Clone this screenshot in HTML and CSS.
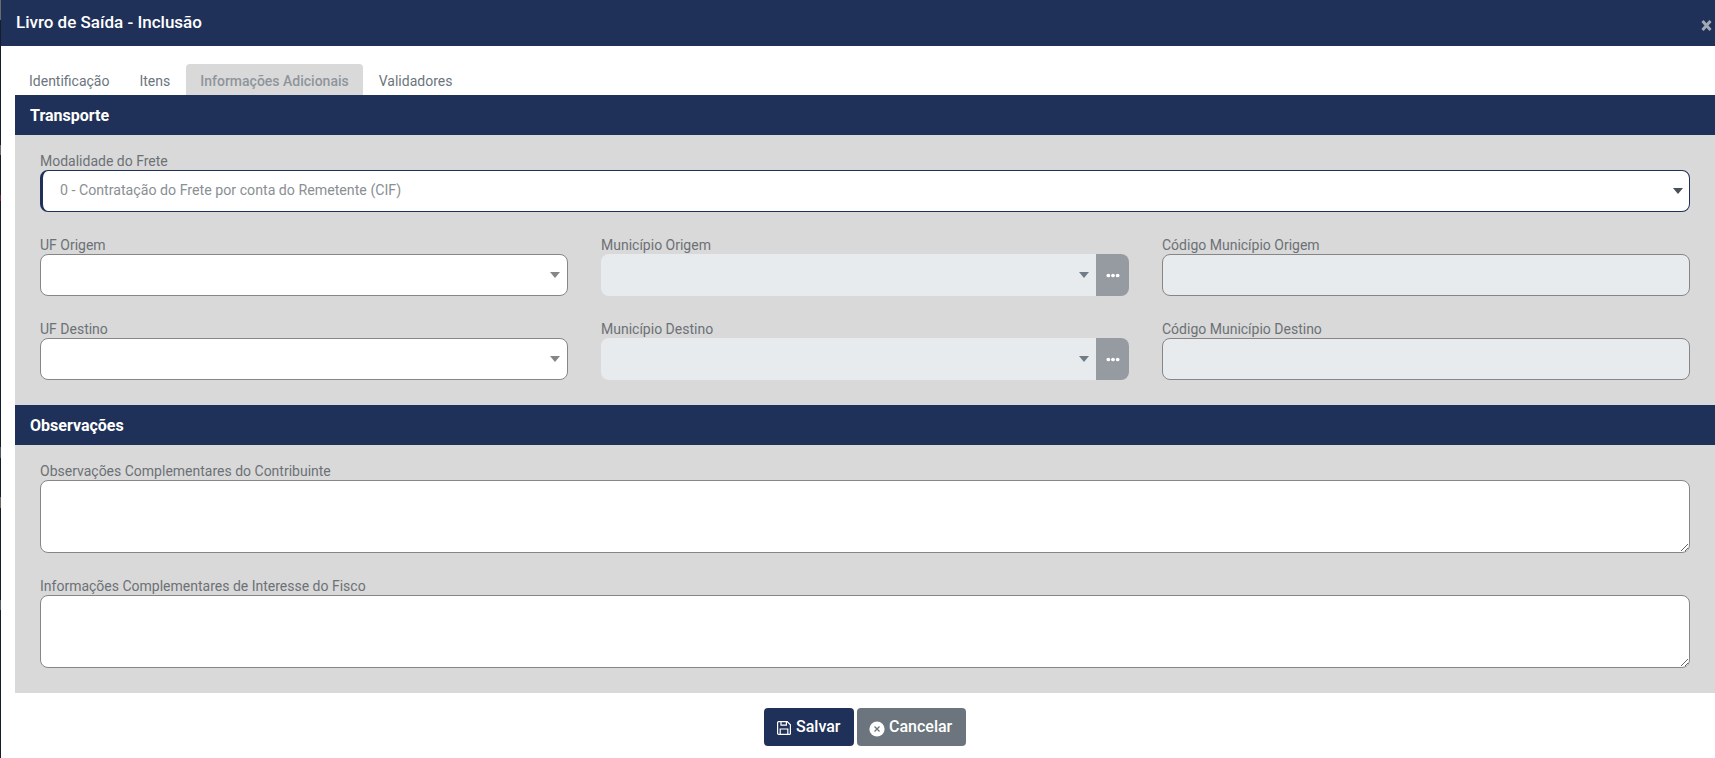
FILE: index.html
```html
<!DOCTYPE html>
<html lang="pt-BR">
<head>
<meta charset="utf-8">
<title>Livro de Saída - Inclusão</title>
<link rel="stylesheet" href="styles.css">
</head>
<body>
<div class="modal">
  <header class="modal-header">
    <h1 class="modal-title">Livro de Saída - Inclusão</h1>
    <svg class="modal-close" viewBox="0 0 11 13" aria-label="Fechar"><path d="M1.5 2l8 9M9.5 2l-8 9"/></svg>
  </header>
  <nav class="tabs">
    <a class="tab">Identificação</a>
    <a class="tab">Itens</a>
    <a class="tab tab-active">Informações Adicionais</a>
    <a class="tab">Validadores</a>
  </nav>
  <section class="section">
    <h2 class="section-title">Transporte</h2>
    <div class="section-body section-body-transport">
      <div class="field">
        <label class="label">Modalidade do Frete</label>
        <div class="select select-focus">
          <span class="select-value">0 - Contratação do Frete por conta do Remetente (CIF)</span>
          <span class="caret caret-dark"></span>
        </div>
      </div>
      <div class="grid">
        <div class="field">
          <label class="label">UF Origem</label>
          <div class="select"><span class="caret"></span></div>
        </div>
        <div class="field">
          <label class="label">Município Origem</label>
          <div class="lookup">
            <div class="select select-disabled"><span class="caret caret-blue"></span></div>
            <button class="lookup-btn" type="button" aria-label="Buscar"><svg class="dots" viewBox="0 0 12 4"><circle cx="2" cy="2" r="1.6"/><circle cx="6" cy="2" r="1.6"/><circle cx="10" cy="2" r="1.6"/></svg></button>
          </div>
        </div>
        <div class="field">
          <label class="label">Código Município Origem</label>
          <div class="input-disabled"></div>
        </div>
        <div class="field">
          <label class="label">UF Destino</label>
          <div class="select"><span class="caret"></span></div>
        </div>
        <div class="field">
          <label class="label">Município Destino</label>
          <div class="lookup">
            <div class="select select-disabled"><span class="caret caret-blue"></span></div>
            <button class="lookup-btn" type="button" aria-label="Buscar"><svg class="dots" viewBox="0 0 12 4"><circle cx="2" cy="2" r="1.6"/><circle cx="6" cy="2" r="1.6"/><circle cx="10" cy="2" r="1.6"/></svg></button>
          </div>
        </div>
        <div class="field">
          <label class="label">Código Município Destino</label>
          <div class="input-disabled"></div>
        </div>
      </div>
    </div>
  </section>
  <section class="section">
    <h2 class="section-title">Observações</h2>
    <div class="section-body section-body-notes">
      <div class="field">
        <label class="label">Observações Complementares do Contribuinte</label>
        <textarea class="textarea"></textarea>
      </div>
      <div class="field">
        <label class="label">Informações Complementares de Interesse do Fisco</label>
        <textarea class="textarea"></textarea>
      </div>
    </div>
  </section>
  <footer class="footer">
    <button class="btn btn-primary" type="button">
      <svg class="btn-icon" viewBox="0 0 16 16" fill="none" stroke="#fff" stroke-width="1.2"><path d="M2.6 1.6h8.6l3.2 3.2v8.6a1 1 0 0 1-1 1H2.6a1 1 0 0 1-1-1V2.6a1 1 0 0 1 1-1z"/><path d="M5 1.8v3.4h5.4V1.8"/><path d="M4.2 14.2V9h7.6v5.2"/></svg>
      <span class="btn-text">Salvar</span>
    </button>
    <button class="btn btn-secondary" type="button">
      <svg class="btn-icon btn-icon-low" viewBox="0 0 16 16"><circle cx="8" cy="8" r="7.6" fill="#fff"/><path d="M5.5 5.5l5 5M10.5 5.5l-5 5" stroke="#6c757d" stroke-width="1.3" fill="none"/></svg>
      <span class="btn-text">Cancelar</span>
    </button>
  </footer>
</div>
</body>
</html>
```
FILE: styles.css
```css
* { box-sizing: border-box; }
html, body { height: 100%; }
body {
  margin: 0;
  background: linear-gradient(
    #6a6a6a 0 20px, #141d2c 20px 145px, #6a6a6a 145px 155px, #141d2c 155px 195px,
    #6d2230 195px 201px, #141d2c 201px 447px, #4c5560 447px 458px, #141d2c 458px 497px,
    #6b665c 497px 508px, #141d2c 508px 600px, #4c5e66 600px 610px, #141d2c 610px
  );
  font-family: Roboto, "Liberation Sans", sans-serif;
  font-size: 14px;
  overflow: hidden;
}
.modal {
  margin-left: 1px;
  height: 758px;
  background: #fff;
  display: flex;
  flex-direction: column;
}
.modal-header {
  height: 46px;
  flex: none;
  background: #1f3158;
  display: flex;
  justify-content: space-between;
  padding: 14px 0 0 15px;
  color: #fff;
}
.modal-title {
  margin: 0;
  font-size: 17px;
  line-height: 17px;
  font-weight: 500;
}
.modal-close {
  width: 11px;
  height: 13px;
  margin-top: 5px;
  margin-right: 3px;
  fill: none;
  stroke: #a2a9b5;
  stroke-width: 3;
}
.tabs {
  flex: none;
  height: 49px;
  padding: 18px 0 0 14px;
  display: flex;
  gap: 2px;
}
.tab {
  height: 31px;
  padding: 0 14px;
  line-height: 35px;
  color: #6c757d;
  border-radius: 4px 4px 0 0;
}
.tab-active {
  background: #d9d9d9;
  color: #8f959b;
  font-weight: 500;
}
.section { margin-left: 14px; flex: none; }
.section-title {
  margin: 0;
  height: 40px;
  padding-left: 15px;
  background: #1f3158;
  color: #fff;
  font-size: 16px;
  font-weight: 700;
  line-height: 41px;
}
.section-body {
  background: #d9d9d9;
  padding: 17px 25px 25px 25px;
  display: flex;
  flex-direction: column;
  gap: 24px;
}
.grid {
  display: grid;
  grid-template-columns: repeat(3, 1fr);
  column-gap: 33px;
  row-gap: 24px;
}
.field { display: flex; flex-direction: column; min-width: 0; }
.label {
  height: 18px;
  line-height: 18px;
  color: #6c7176;
}
.select {
  position: relative;
  height: 42px;
  background: #fff;
  border: 1px solid #868686;
  border-radius: 8px;
  display: flex;
  align-items: center;
  padding-left: 17px;
}
.select-focus {
  border-color: #1f3158;
  border-left-width: 3px;
}
.select-value { color: #8a8f94; font-size: 14.2px; padding-bottom: 2px; }
.select-disabled {
  flex: 1;
  background: #e8ebee;
  border: 0;
  border-radius: 8px 0 0 8px;
}
.caret {
  position: absolute;
  right: 6px;
  top: 50%;
  margin-top: -3px;
  width: 0;
  height: 0;
  border-left: 5.5px solid transparent;
  border-right: 5.5px solid transparent;
  border-top: 6px solid #868686;
}
.select:not(.select-focus) .caret { right: 7px; }
.caret-dark { border-top-color: #4a5058; }
.caret-blue { border-top-color: #727c89; }
.lookup { display: flex; height: 42px; }
.lookup-btn {
  width: 33px;
  height: 42px;
  padding: 0;
  border: 0;
  background: #969ba2;
  border-radius: 0 8px 8px 0;
  display: flex;
  align-items: center;
  justify-content: center;
}
.dots { width: 14px; height: 5px; fill: #fff; }
.input-disabled {
  height: 42px;
  background: #e8ebee;
  border: 1px solid #868686;
  border-radius: 8px;
}
.textarea {
  display: block;
  width: 100%;
  height: 73px;
  margin: 0;
  background: #fff;
  border: 1px solid #868686;
  border-radius: 8px;
  resize: vertical;
  outline: 0;
}
.footer {
  flex: none;
  padding-top: 15px;
  padding-left: 763px;
  display: flex;
  gap: 3px;
}
.btn {
  height: 38px;
  padding: 0 12px;
  border: 0;
  border-radius: 4px;
  color: #fff;
  font-family: inherit;
  font-size: 16px;
  font-weight: 500;
  display: flex;
  align-items: center;
  gap: 4px;
}
.btn-text { padding-bottom: 2px; }
.btn-primary { width: 90px; background: #1f3158; }
.btn-secondary { width: 109px; background: #6c757d; }
.btn-icon { width: 16px; height: 16px; flex: none; margin-top: 2px; }
.btn-icon-low { margin-top: 3px; }
```
